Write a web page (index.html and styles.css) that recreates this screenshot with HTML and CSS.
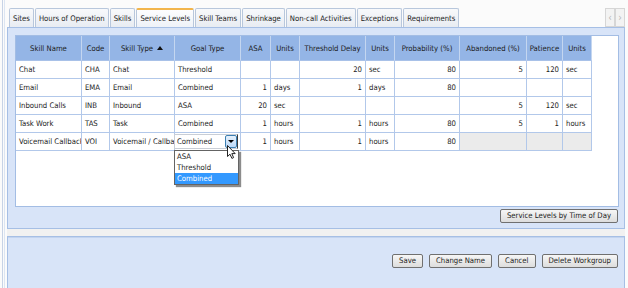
FILE: index.html
```html
<!DOCTYPE html>
<html>
<head>
<meta charset="utf-8">
<link rel="stylesheet" href="styles.css">
</head>
<body>
<div class="app">
 <div class="frame">
  <div class="frame-inner">
   <div class="tabbar">
    <div class="tabs">
     <div class="tab">Sites</div>
     <div class="tab">Hours of Operation</div>
     <div class="tab">Skills</div>
     <div class="tab tab-active">Service Levels</div>
     <div class="tab">Skill Teams</div>
     <div class="tab">Shrinkage</div>
     <div class="tab">Non-call Activities</div>
     <div class="tab">Exceptions</div>
     <div class="tab">Requirements</div>
    </div>
    <div class="scroller">
     <span class="scroll-btn">&#8249;</span>
     <span class="scroll-btn">&#8250;</span>
    </div>
   </div>

   <div class="panel panel-main">
    <div class="grid">
     <div class="grid-row grid-head">
      <div class="cell">Skill Name</div>
      <div class="cell">Code</div>
      <div class="cell">Skill Type <span class="sort-up"></span></div>
      <div class="cell">Goal Type</div>
      <div class="cell">ASA</div>
      <div class="cell">Units</div>
      <div class="cell">Threshold Delay</div>
      <div class="cell">Units</div>
      <div class="cell">Probability (%)</div>
      <div class="cell">Abandoned (%)</div>
      <div class="cell">Patience</div>
      <div class="cell">Units</div>
     </div>
     <div class="grid-row">
      <div class="cell">Chat</div>
      <div class="cell">CHA</div>
      <div class="cell">Chat</div>
      <div class="cell">Threshold</div>
      <div class="cell num"></div>
      <div class="cell"></div>
      <div class="cell num">20</div>
      <div class="cell">sec</div>
      <div class="cell num">80</div>
      <div class="cell num">5</div>
      <div class="cell num">120</div>
      <div class="cell">sec</div>
     </div>
     <div class="grid-row">
      <div class="cell">Email</div>
      <div class="cell">EMA</div>
      <div class="cell">Email</div>
      <div class="cell">Combined</div>
      <div class="cell num">1</div>
      <div class="cell">days</div>
      <div class="cell num">1</div>
      <div class="cell">days</div>
      <div class="cell num">80</div>
      <div class="cell num"></div>
      <div class="cell num"></div>
      <div class="cell"></div>
     </div>
     <div class="grid-row">
      <div class="cell">Inbound Calls</div>
      <div class="cell">INB</div>
      <div class="cell">Inbound</div>
      <div class="cell">ASA</div>
      <div class="cell num">20</div>
      <div class="cell">sec</div>
      <div class="cell num"></div>
      <div class="cell"></div>
      <div class="cell num"></div>
      <div class="cell num">5</div>
      <div class="cell num">120</div>
      <div class="cell">sec</div>
     </div>
     <div class="grid-row">
      <div class="cell">Task Work</div>
      <div class="cell">TAS</div>
      <div class="cell">Task</div>
      <div class="cell">Combined</div>
      <div class="cell num">1</div>
      <div class="cell">hours</div>
      <div class="cell num">1</div>
      <div class="cell">hours</div>
      <div class="cell num">80</div>
      <div class="cell num">5</div>
      <div class="cell num">1</div>
      <div class="cell">hours</div>
     </div>
     <div class="grid-row">
      <div class="cell">Voicemail Callback</div>
      <div class="cell">VOI</div>
      <div class="cell">Voicemail / Callback</div>
      <div class="cell cell-edit">
       <div class="combo">
        <span class="combo-text">Combined</span>
        <span class="combo-btn"><span class="caret-down"></span></span>
       </div>
       <div class="combo-list">
        <div class="combo-item">ASA</div>
        <div class="combo-item">Threshold</div>
        <div class="combo-item combo-item-sel">Combined</div>
       </div>
       <svg class="cursor" width="10" height="15" viewBox="0 0 10 15">
        <path d="M0.5 0.5 L0.5 11.5 L3 9.2 L4.9 13.4 L6.6 12.6 L4.8 8.6 L8.2 8.6 Z" fill="#ffffff" stroke="#222222" stroke-width="1" stroke-linejoin="round"/>
       </svg>
      </div>
      <div class="cell num">1</div>
      <div class="cell">hours</div>
      <div class="cell num">1</div>
      <div class="cell">hours</div>
      <div class="cell num">80</div>
      <div class="cell num off"></div>
      <div class="cell num off"></div>
      <div class="cell off"></div>
     </div>
    </div>
    <div class="panel-actions">
     <button class="btn">Service Levels by Time of Day</button>
    </div>
   </div>

   <div class="separator"></div>

   <div class="panel panel-bottom">
    <button class="btn">Save</button>
    <button class="btn">Change Name</button>
    <button class="btn">Cancel</button>
    <button class="btn">Delete Workgroup</button>
   </div>
  </div>
 </div>
</div>
</body>
</html>
```

FILE: styles.css
```css
html, body {
  margin: 0;
  padding: 0;
}

body {
  width: 628px;
  height: 288px;
  overflow: hidden;
  background: #fbfbfb;
  font-family: "DejaVu Sans Condensed", "DejaVu Sans", sans-serif;
  font-stretch: condensed;
  font-size: 7.7px;
  color: #1b1b1b;
}

.app {
  height: 288px;
  padding-left: 2px;
  box-sizing: border-box;
}

.frame {
  height: 100%;
  border-left: 1px solid #c7d3e6;
  padding-left: 1px;
}

.frame-inner {
  height: 100%;
  box-sizing: border-box;
  border-left: 1px solid #dce5f2;
  padding-left: 2px;
  padding-top: 8px;
  display: flex;
  flex-direction: column;
}

/* Tabs */
.tabbar {
  display: flex;
  height: 19px;
  padding-left: 2px;
}

.tabs {
  display: flex;
  gap: 1px;
  height: 19px;
}

.tab {
  height: 19px;
  box-sizing: border-box;
  padding: 0 3px;
  border: 1px solid #b8c7dc;
  border-bottom: none;
  border-radius: 2px 2px 0 0;
  background: linear-gradient(#f8f9fb, #e8ecf2);
  display: flex;
  align-items: center;
  white-space: nowrap;
}

.tab-active {
  border-top: 2px solid #f2b54c;
  background: linear-gradient(#fdfdfe, #eef2f8);
}

.scroller {
  margin-left: auto;
  margin-right: 3px;
  display: flex;
}

.scroll-btn {
  width: 10px;
  height: 19px;
  box-sizing: border-box;
  border: 1px solid #d6d6d6;
  background: #f3f3f3;
  color: #b5b5b5;
  font-size: 10px;
  display: flex;
  align-items: center;
  justify-content: center;
}

/* Panels */
.panel {
  width: 618px;
  box-sizing: border-box;
  border: 1px solid #a6bfe5;
  background: #d8e4f8;
}

.panel-main {
  height: 202px;
  padding: 7px 6px 0 7px;
}

.grid {
  width: 604px;
  height: 172px;
  box-sizing: border-box;
  border: 1px solid #a3bde4;
  background: #ffffff;
}

.grid-row {
  display: grid;
  grid-template-columns: 66px 28px 65px 66px 30px 29px 66px 29px 65px 67px 36px 29px;
}

.cell {
  box-sizing: border-box;
  height: 18px;
  border-right: 1px solid #b2c8ea;
  border-bottom: 1px solid #b2c8ea;
  padding: 0 3px;
  display: flex;
  align-items: center;
  white-space: nowrap;
  overflow: hidden;
}

.num {
  justify-content: flex-end;
}

.grid-head .cell {
  height: 25px;
  background: #94b5e6;
  justify-content: center;
  border-right-color: #c4d6f0;
  border-bottom-color: #a8c1e8;
}

.sort-up {
  width: 0;
  height: 0;
  margin-left: 4px;
  border-left: 3px solid transparent;
  border-right: 3px solid transparent;
  border-bottom: 4px solid #111111;
}

.off {
  background: #ebebeb;
}

/* Combo editor */
.cell-edit {
  position: relative;
  overflow: visible;
  padding: 0;
  z-index: 2;
}

.combo {
  width: 64px;
  height: 15px;
  margin-left: -1px;
  box-sizing: border-box;
  border: 1px solid #c9ced6;
  border-right: 1px solid #3a3a3a;
  background: #ffffff;
  display: flex;
  align-items: center;
  padding-left: 2px;
}

.combo-text {
  flex: 1;
}

.combo-btn {
  width: 12px;
  height: 13px;
  box-sizing: border-box;
  border: 1px solid #3c7fb1;
  border-radius: 2px;
  background: linear-gradient(#e6f1fc, #bcd8f6);
  display: flex;
  align-items: center;
  justify-content: center;
}

.caret-down {
  width: 0;
  height: 0;
  border-left: 3px solid transparent;
  border-right: 3px solid transparent;
  border-top: 3px solid #000000;
}

.combo-list {
  position: absolute;
  left: -1px;
  top: 17px;
  width: 65px;
  box-sizing: border-box;
  border: 1px solid #646464;
  background: #ffffff;
  box-shadow: 2px 2px 1px rgba(0, 0, 0, 0.45);
}

.combo-item {
  height: 11px;
  line-height: 11px;
  padding-left: 2px;
}

.combo-item-sel {
  background: #3399ff;
  color: #ffffff;
}

.cursor {
  position: absolute;
  left: 52px;
  top: 12px;
}

/* Buttons */
.panel-actions {
  display: flex;
  justify-content: flex-end;
  margin-top: 2px;
}

.btn {
  font: inherit;
  color: #1b1b1b;
  height: 14px;
  box-sizing: border-box;
  padding: 0 6px;
  border: 1px solid #707070;
  border-radius: 2px;
  background: linear-gradient(#f6f6f6, #dddddd);
  line-height: 12px;
  white-space: nowrap;
}

.separator {
  width: 618px;
  height: 7px;
  background: #f1f1f1;
}

.panel-bottom {
  flex: 1;
  border-bottom: none;
  box-shadow: inset 0 1px 0 #c3d4ef;
  padding: 17px 6px 0 0;
  display: flex;
  justify-content: flex-end;
  align-items: flex-start;
  gap: 6px;
}
```
